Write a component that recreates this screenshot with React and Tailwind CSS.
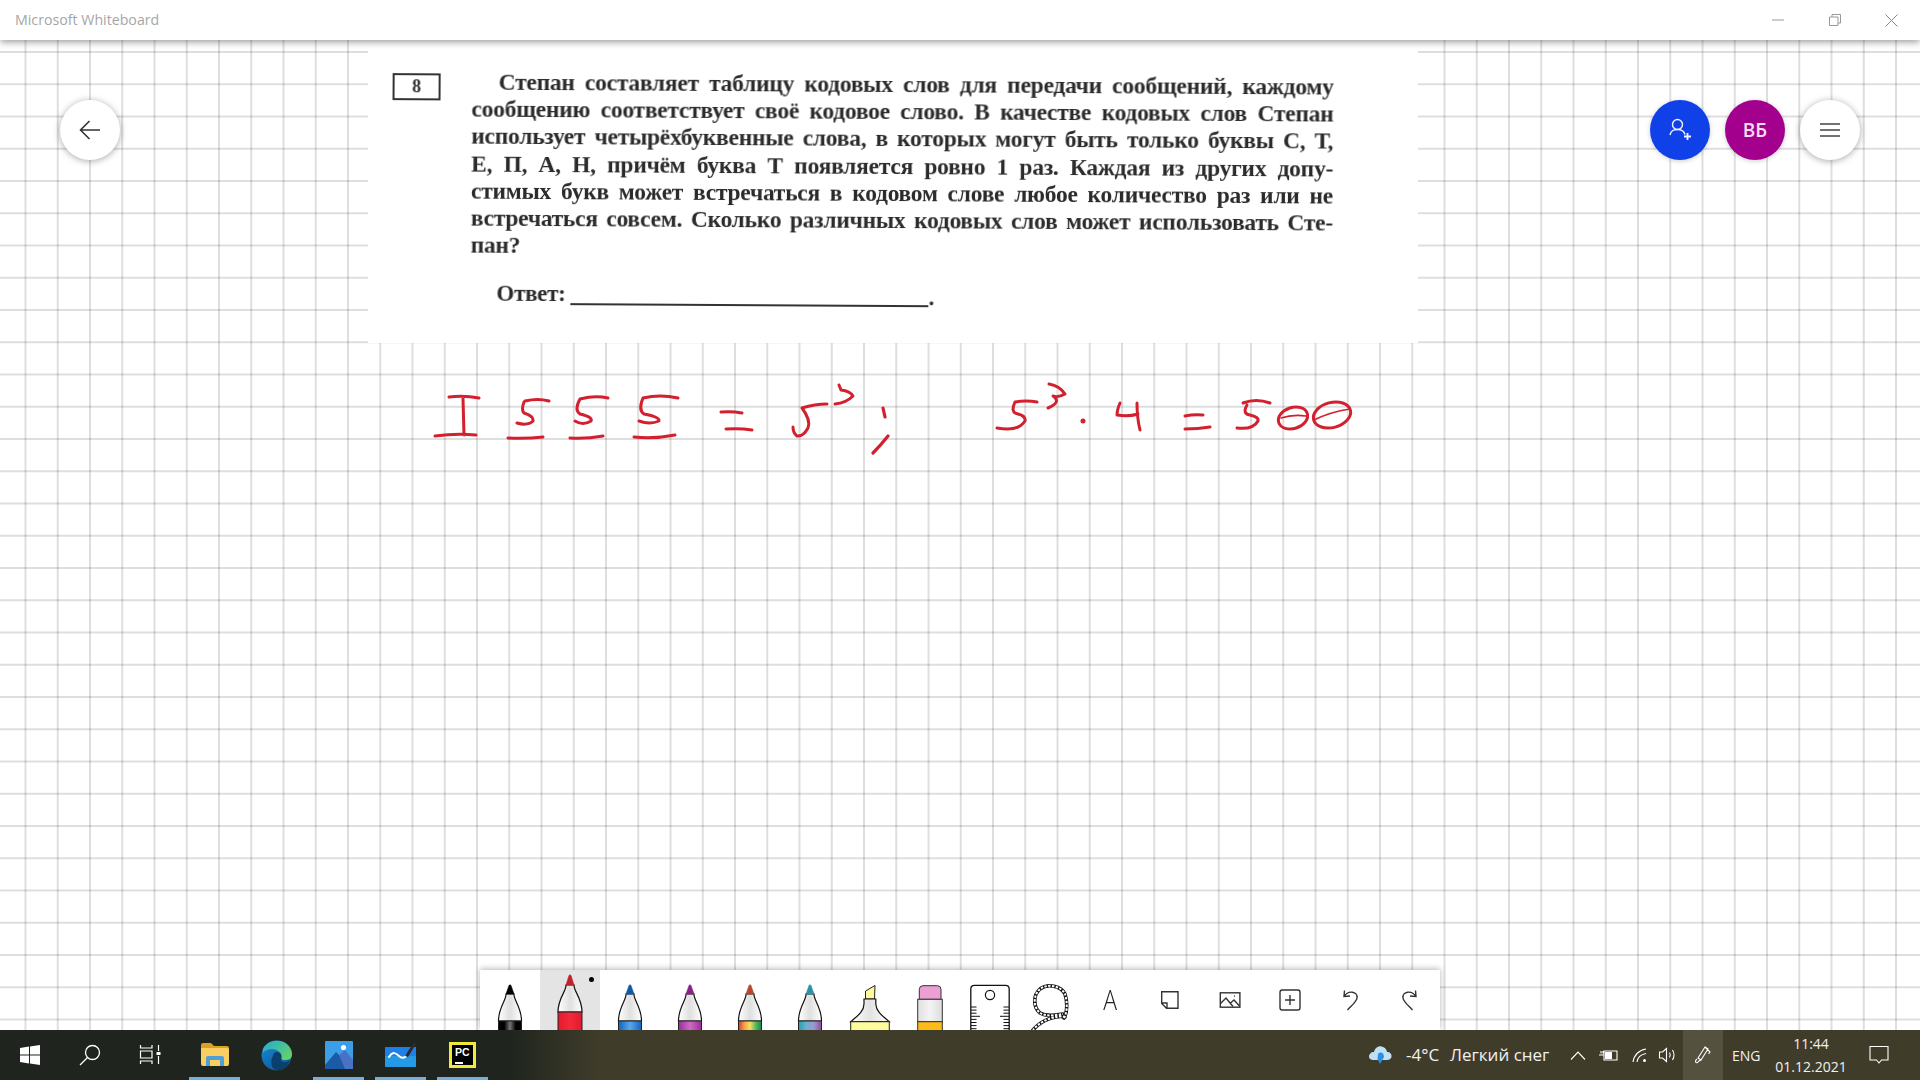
import React from "react";

const serif = "font-['Liberation_Serif',serif]";
const ui = "font-['Open_Sans',sans-serif]";

const LINES = [
  { t: "Степан составляет таблицу кодовых слов для передачи сообщений, каждому", indent: true },
  { t: "сообщению соответствует своё кодовое слово. В качестве кодовых слов Степан" },
  { t: "использует четырёхбуквенные слова, в которых могут быть только буквы С, Т," },
  { t: "Е, П, А, Н, причём буква Т появляется ровно 1 раз. Каждая из других допу-" },
  { t: "стимых букв может встречаться в кодовом слове любое количество раз или не" },
  { t: "встречаться совсем. Сколько различных кодовых слов может использовать Сте-" },
];

function Pen({ nib, id, raised, stops }) {
  const top = raised ? 5 : 15;
  const nibEnd = raised ? 15 : 24;
  const bandY = raised ? 42 : 51;
  const half = raised ? 12 : 11.5;
  return (
    <svg width="60" height="60" viewBox="0 0 60 60">
      <defs>
        <linearGradient id={`b${id}`} x1="0" x2="1" y1="0" y2="0">
          <stop offset="0" stopColor="#fff" />
          <stop offset="0.5" stopColor="#dfdfdf" />
          <stop offset="1" stopColor="#fff" />
        </linearGradient>
        <linearGradient id={`c${id}`} x1="0" x2="1" y1="0" y2="0">
          {stops.map((s, i) => (
            <stop key={i} offset={i / (stops.length - 1)} stopColor={s} />
          ))}
        </linearGradient>
      </defs>
      <path
        d={`M${30 - half} ${bandY} C${30 - half} ${bandY - 14} ${26.5} ${nibEnd + 6} 26 ${nibEnd} L34 ${nibEnd} C${33.5} ${nibEnd + 6} ${30 + half} ${bandY - 14} ${30 + half} ${bandY} Z`}
        fill={`url(#b${id})`}
        stroke="#111"
        strokeWidth="1.2"
      />
      <path d={`M26 ${nibEnd} L29 ${top + 0.5} Q30 ${top - 1} 31 ${top + 0.5} L34 ${nibEnd} Z`} fill={nib} stroke={nib} strokeWidth="0.6" />
      <rect x={30 - half} y={bandY} width={half * 2} height={60 - bandY + 1} fill={`url(#c${id})`} stroke="#222" strokeWidth="1" />
    </svg>
  );
}

function Highlighter() {
  return (
    <svg width="60" height="60" viewBox="0 0 60 60">
      <defs>
        <linearGradient id="hb" x1="0" x2="1" y1="0" y2="0">
          <stop offset="0" stopColor="#fff" />
          <stop offset="0.5" stopColor="#e2e2e2" />
          <stop offset="1" stopColor="#fff" />
        </linearGradient>
      </defs>
      <path d="M25.5 21 L35 15.5 L34.5 29 L25.5 29 Z" fill="#fdfa9c" stroke="#222" strokeWidth="1" />
      <path d="M24 29 L35.8 29 L35.8 34 C36 42 44 47 49.3 51.7 L10.7 51.7 C16 47 24 42 24 34 Z" fill="url(#hb)" stroke="#111" strokeWidth="1.2" />
      <rect x="10.7" y="51.7" width="38.6" height="10" fill="#fdfb9e" stroke="#222" strokeWidth="1" />
    </svg>
  );
}

function Eraser() {
  return (
    <svg width="60" height="60" viewBox="0 0 60 60">
      <defs>
        <linearGradient id="eb" x1="0" x2="1" y1="0" y2="0">
          <stop offset="0" stopColor="#e0e0e0" />
          <stop offset="0.5" stopColor="#f4f4f4" />
          <stop offset="1" stopColor="#dcdcdc" />
        </linearGradient>
      </defs>
      <path d="M19.3 29.3 L19.3 19.5 Q19.3 15.7 23 15.7 L37.5 15.7 Q41 15.7 41 19.5 L41 29.3 Z" fill="#eb9fd2" stroke="#333" strokeWidth="1" />
      <rect x="17.7" y="29.3" width="24.6" height="22.4" fill="url(#eb)" stroke="#333" strokeWidth="1" />
      <rect x="17.7" y="51.7" width="24.6" height="10" fill="#fdbb19" stroke="#333" strokeWidth="1" />
    </svg>
  );
}

function Ruler() {
  const ticks = [];
  for (let i = 0; i < 8; i++) {
    const y = 37 + i * 3.1;
    const long = i === 3;
    ticks.push(<path key={i} d={`M11 ${y} H${long ? 20 : 16.5} M49 ${y} H${long ? 40 : 43.5}`} />);
  }
  return (
    <svg width="60" height="60" viewBox="0 0 60 60" fill="none" stroke="#111" strokeWidth="1">
      <path d="M10.8 61 V19 Q10.8 15.3 14.5 15.3 H45.5 Q49.2 15.3 49.2 19 V61" strokeWidth="1.3" fill="#fff" />
      <circle cx="30" cy="25" r="4.6" strokeWidth="1.2" />
      {ticks}
    </svg>
  );
}

function Lasso() {
  const d = "M44 48 C48 41 47 30 45 24 C41 16 28 13 20 19 C13 25 13 37 20 43 C27 47 36 45 43 44 M45 47 C38 45 22 49 13 60";
  return (
    <svg width="60" height="60" viewBox="0 0 60 60" fill="none">
      <path d={d} stroke="#111" strokeWidth="3.6" strokeLinecap="round" />
      <path d={d} stroke="#fff" strokeWidth="2" strokeDasharray="2.4 1.4" />
    </svg>
  );
}

const iconStroke = { fill: "none", stroke: "#333", strokeWidth: 1.4 };

function Note() {
  return (
    <svg width="60" height="60" viewBox="0 0 60 60" {...iconStroke}>
      <path d="M21.7 21.7 H38 V38.3 H26.5 L21.7 33.5 Z M21.7 33 H27 V38.3" />
    </svg>
  );
}
function Picture() {
  return (
    <svg width="60" height="60" viewBox="0 0 60 60" {...iconStroke}>
      <rect x="20.3" y="22.8" width="19.6" height="14.4" />
      <path d="M20.5 33.5 L26 28 L33 36.5 M30.5 33 L34 30 L39.5 36" />
      <circle cx="34.5" cy="26" r="0.7" fill="#333" stroke="none" />
    </svg>
  );
}
function PlusBox() {
  return (
    <svg width="60" height="60" viewBox="0 0 60 60" {...iconStroke}>
      <rect x="20" y="20" width="20" height="20" rx="2.2" />
      <path d="M30 25 V35 M25 30 H35" />
    </svg>
  );
}
function Undo({ flip }) {
  return (
    <svg width="60" height="60" viewBox="0 0 60 60" {...iconStroke} className={flip ? "-scale-x-100" : ""}>
      <path d="M24.5 20.5 L24 26.5 L30 26 M24 26.5 C28 20 38 21 37 28 C36.5 32 31 36 27.5 40" />
    </svg>
  );
}

function Ink() {
  const red = "#d3202f";
  return (
    <svg className="absolute inset-0 h-full w-full blur-[0.3px]" viewBox="0 40 1920 990" fill="none" stroke={red} strokeWidth="3" strokeLinecap="round" strokeLinejoin="round">
      <path d="M449 397 Q464 395 479 398 M463 398 L464 435 M435 436 Q456 433 476 435" />
      <path d="M525 401 Q538 398 549 401 M524 402 Q521 410 524 413 Q534 416 533 421 Q528 426 517 423 M508 438 Q526 439 543 437" />
      <path d="M580 399 Q595 395 608 398 M580 399 Q574 410 580 414 Q593 417 591 421 Q583 426 575 421 M570 438 Q586 439 603 436" />
      <path d="M643 398 Q660 394 678 398 M643 398 Q638 410 644 414 Q660 417 659 421 Q650 425 639 421 M634 437 Q655 439 675 435" />
      <path d="M721 412 Q732 411 742 413 M726 429 Q740 428 752 430" />
      <path d="M802 408 Q815 404 827 404 M802 408 Q811 420 808 428 Q803 437 797 436 Q793 433 793 427" />
      <path d="M839 385 L841 390 Q850 391 853 396 Q846 403 835 404" />
      <path d="M883 408 L885 417 M888 436 Q880 446 873 453" strokeWidth="3.2" />
      <path d="M1015 402 Q1026 400 1037 402 M1015 402 Q1010 413 1018 414 Q1026 416 1025 421 Q1018 432 997 428" />
      <path d="M1049 384 Q1060 386 1065 394 Q1058 398 1053 396 Q1062 402 1048 408" />
      <circle cx="1083" cy="421" r="1" fill={red} />
      <path d="M1120 403 Q1117 410 1117 415 Q1128 417 1138 414 M1137 403 Q1137 418 1140 430" />
      <path d="M1185 416 Q1194 414 1203 415 M1185 429 Q1198 429 1210 427" />
      <path d="M1243 403 Q1256 398 1270 403 M1247 405 Q1242 414 1250 415 Q1259 417 1258 421 Q1253 430 1237 428" />
      <ellipse cx="1293" cy="418" rx="15" ry="10.5" transform="rotate(-18 1293 418)" />
      <ellipse cx="1332" cy="415" rx="19" ry="12.5" transform="rotate(-15 1332 415)" />
      <path d="M1281 418 Q1293 414 1306 416 M1314 420 Q1330 412 1350 409" strokeWidth="1.6" />
    </svg>
  );
}

function Win() {
  return (
    <svg width="20" height="20" viewBox="0 0 20 20" fill="#fff">
      <path d="M0 3 L9 1.6 V9.5 H0 Z M10 1.4 L20 0 V9.5 H10 Z M0 10.5 H9 V18.4 L0 17 Z M10 10.5 H20 V20 L10 18.6 Z" />
    </svg>
  );
}

function Search() {
  return (
    <svg width="24" height="24" viewBox="0 0 24 24" fill="none" stroke="#fff" strokeWidth="1.3">
      <circle cx="14.5" cy="9.5" r="7" />
      <path d="M9.5 14.5 L2 22" />
    </svg>
  );
}

function TaskView() {
  return (
    <svg width="22" height="20" viewBox="0 0 22 20" fill="none" stroke="#fff" strokeWidth="1.2">
      <path d="M1.5 0 V3 H13 V0 M1.5 6 H13 V13 H1.5 Z M1.5 19 V16 H13 V19 M19.5 0 V6 M19.5 11 V19" />
      <rect x="17.5" y="7" width="4" height="3" fill="#fff" stroke="none" />
    </svg>
  );
}

function Folder() {
  return (
    <svg width="28" height="24" viewBox="0 0 28 24">
      <path d="M0 2 Q0 0 2 0 H10 L13 3 H26 Q28 3 28 5 V8 H0 Z" fill="#d9a21f" />
      <path d="M0 5 H26 Q28 5 28 7 V21 Q28 23 26 23 H2 Q0 23 0 21 Z" fill="#f8cf60" />
      <path d="M5 23 V15 Q5 13 7 13 H21 Q23 13 23 15 V23 H19 V17 H9 V23 Z" fill="#4f9fd6" />
    </svg>
  );
}

function Edge() {
  return (
    <svg width="31" height="31" viewBox="0 0 31 31">
      <defs>
        <linearGradient id="eg" x1="0.2" y1="0" x2="1" y2="0.7">
          <stop offset="0" stopColor="#2bb0c9" />
          <stop offset="1" stopColor="#63d06a" />
        </linearGradient>
        <linearGradient id="eb2" x1="0" y1="0" x2="0.5" y2="1">
          <stop offset="0" stopColor="#1b8bd8" />
          <stop offset="1" stopColor="#0d5f9f" />
        </linearGradient>
      </defs>
      <circle cx="15.5" cy="15.5" r="15" fill="url(#eb2)" />
      <path d="M2 9 C6 0 20 -2 27 5 C32 10 32 17 29 19 C25 21 19 20 20 17 C21 13 16 9 11 9 C7 9 4 10 2 13 Z" fill="url(#eg)" />
      <path d="M12 16 C12 11 18 11 20 14 C22 18 18 21 22 22 C25 23 28 21 29 20 C27 27 20 31 15 30 C10 29 9 20 12 16 Z" fill="#0a3f6e" />
    </svg>
  );
}

function Photos() {
  return (
    <svg width="28" height="28" viewBox="0 0 28 28">
      <rect width="28" height="28" rx="1" fill="#3d9ee8" />
      <circle cx="18.5" cy="6.5" r="2.6" fill="#fff" />
      <path d="M0 24 L11 11 L28 28 H0 Z" fill="#1a5aa6" />
      <path d="M14 14 L20 9 L28 19 V28 H20 Z" fill="#4a72c4" />
    </svg>
  );
}

function BoardIcon() {
  return (
    <svg width="31" height="27" viewBox="0 0 31 27">
      <path d="M0 5 H31 V24 Q31 25 30 25 H1 Q0 25 0 24 Z" fill="#1f7ee8" />
      <path d="M0 14 H31 V24 Q31 25 30 25 H1 Q0 25 0 24 Z" fill="#26a5e4" opacity="0.7" />
      <path d="M4 15 C8 9 11 11 14 14 C17 17 20 16 22 13" stroke="#fff" strokeWidth="2" fill="none" strokeLinecap="round" />
      <path d="M20 14 L29 0 L31 2 L23 15 Z" fill="#2a2a30" />
    </svg>
  );
}

function PyCharm() {
  return (
    <div className="flex h-[26px] w-[27px] flex-col items-start bg-[#f2e93a] p-[3px]">
      <div className="flex h-full w-full flex-col bg-black pl-[3px] pt-[2px] font-['Liberation_Sans',sans-serif] text-[10.5px] font-bold leading-[10px] text-white">
        PC
        <div className="mt-[5px] h-[1.5px] w-[8px] bg-white" />
      </div>
    </div>
  );
}

function Cloud() {
  return (
    <svg width="24" height="22" viewBox="0 0 24 22" className="shrink-0">
      <path d="M5 16 C1 16 0 12 2 10 C3 8 5 8 6 8 C7 3 12 1 15 3 C18 4 19 7 19 8 C22 8 24 10 23.5 13 C23 15 21 16 19 16 Z" fill="#bfe0f5" />
      <path d="M10 10 C13 7 16 9 16 13 L12 20 L9.5 15 Z" fill="#2d8fe0" />
    </svg>
  );
}

const trayStroke = { fill: "none", stroke: "#fff", strokeWidth: 1.1 };

function TaskBtn({ children, line }) {
  return (
    <div className="relative flex h-[50px] w-[51px] items-center justify-center">
      {children}
      {line && <div className="absolute bottom-0 left-0 right-0 h-[3px] bg-[#76aedd]" />}
    </div>
  );
}

export default function App() {
  return (
    <div className="flex h-screen w-screen flex-col overflow-hidden bg-white">
      <header className="relative z-20 flex h-10 shrink-0 items-center justify-between bg-white pl-[15px] shadow-[0_2px_7px_rgba(0,0,0,0.4)]">
        <span className={`${ui} text-[14.2px] text-[#a6a6a6]`}>Microsoft Whiteboard</span>
        <div className="flex items-center">
          <div className="flex h-10 w-[57px] items-center justify-center">
            <svg width="12" height="12" viewBox="0 0 12 12" stroke="#999" fill="none"><path d="M0 6 H12" /></svg>
          </div>
          <div className="flex h-10 w-[57px] items-center justify-center">
            <svg width="12" height="12" viewBox="0 0 12 12" stroke="#999" fill="none"><path d="M0.5 3 H9 V11.5 H0.5 Z M3 3 V0.5 H11.5 V9 H9" /></svg>
          </div>
          <div className="flex h-10 w-[57px] items-center justify-center">
            <svg width="13" height="13" viewBox="0 0 13 13" stroke="#888" fill="none"><path d="M0.5 0.5 L12.5 12.5 M12.5 0.5 L0.5 12.5" /></svg>
          </div>
        </div>
      </header>

      <main className="relative flex-1 overflow-hidden bg-white bg-[repeating-linear-gradient(to_right,transparent_0,transparent_24px,rgba(0,0,0,0.13)_25px,rgba(0,0,0,0.13)_26px,transparent_27px,transparent_32.25px),repeating-linear-gradient(to_bottom,transparent_0,transparent_10.5px,rgba(0,0,0,0.13)_11.5px,rgba(0,0,0,0.13)_12.5px,transparent_13.5px,transparent_32.25px)]">
        <div className="absolute left-[368px] top-0 flex h-[303px] w-[1050px] bg-white">
          <div className={`flex h-full w-full rotate-[0.33deg] items-start pl-[24px] pt-[35px] text-[#2b2b2b] blur-[0.45px] ${serif}`}>
            <div className="mt-[1px] flex h-[27px] w-[48px] shrink-0 items-center justify-center border-2 border-[#333] text-[18px] font-bold">8</div>
            <div className="ml-[31px] -mt-[4px] w-[862px]">
              {LINES.map((l) => (
                <div
                  key={l.t}
                  className={`h-[27.2px] whitespace-nowrap text-[23.5px] font-bold leading-[27.2px] tracking-[-0.25px] [text-align-last:justify] ${l.indent ? "pl-[27px]" : ""}`}
                >
                  {l.t}
                </div>
              ))}
              <div className="h-[27.2px] text-[23.5px] font-bold leading-[27.2px] tracking-[-0.25px]">пан?</div>
              <div className="mt-[21px] flex items-end pl-[26px] text-[23px] font-bold leading-[27.2px] tracking-[-0.25px]">
                <span>Ответ:</span>
                <span className="mb-[3px] ml-[5px] h-[2px] w-[358px] bg-[#333]" />
                <span className="leading-[24px]">.</span>
              </div>
            </div>
          </div>
        </div>

        <Ink />

        <button className="absolute left-[60px] top-[60px] flex h-[60px] w-[60px] items-center justify-center rounded-full bg-white shadow-[0_1px_7px_rgba(0,0,0,0.35)]">
          <svg width="22" height="20" viewBox="0 0 22 20" fill="none" stroke="#333" strokeWidth="1.6">
            <path d="M21 10 H1.5 M10.5 1 L1.5 10 L10.5 19" />
          </svg>
        </button>

        <div className="absolute right-[60px] top-[60px] flex gap-[15px]">
          <button className="flex h-[60px] w-[60px] items-center justify-center rounded-full bg-[#1040e8] shadow-[0_1px_5px_rgba(0,0,0,0.2)]">
            <svg width="24" height="24" viewBox="0 0 24 24" fill="none" stroke="#f2f2ff" strokeWidth="1.4">
              <circle cx="9.5" cy="6.5" r="5" />
              <path d="M2 17 C3 12 6 11.5 9.5 11.5 C13 11.5 16 13 17 16.5" />
              <path d="M19.5 15 V22 M16 18.5 H23" strokeWidth="1.8" />
            </svg>
          </button>
          <button className={`flex h-[60px] w-[60px] items-center justify-center rounded-full bg-[#a4008e] text-[19px] font-semibold text-[#f9dcf3] shadow-[0_1px_5px_rgba(0,0,0,0.2)] ${ui}`}>
            ВБ
          </button>
          <button className="flex h-[60px] w-[60px] items-center justify-center rounded-full bg-white shadow-[0_1px_7px_rgba(0,0,0,0.35)]">
            <svg width="20" height="14" viewBox="0 0 20 14" stroke="#444" strokeWidth="1.7">
              <path d="M0 1 H20 M0 7 H20 M0 13 H20" />
            </svg>
          </button>
        </div>

        <div className="absolute bottom-0 left-[480px] flex h-[60px] w-[960px] bg-white shadow-[0_-1px_6px_rgba(0,0,0,0.3)]">
          <div className="h-[60px] w-[60px]"><Pen id="k" nib="#000" stops={["#000", "#000", "#777", "#000", "#000"]} /></div>
          <div className="relative h-[60px] w-[60px] bg-[#e4e4e4]">
            <Pen id="r" raised nib="#c4202c" stops={["#e01c2c", "#f4283a", "#e01c2c"]} />
            <div className="absolute left-[49px] top-[7px] h-[5px] w-[5px] rounded-full bg-black" />
          </div>
          <div className="h-[60px] w-[60px]"><Pen id="b" nib="#0f5aa6" stops={["#0f66c0", "#5ba6e8", "#0f66c0"]} /></div>
          <div className="h-[60px] w-[60px]"><Pen id="p" nib="#8a2283" stops={["#a02a9a", "#cc6cc6", "#a02a9a"]} /></div>
          <div className="h-[60px] w-[60px]"><Pen id="o" nib="#b8472e" stops={["#d43a2a", "#f5a04a", "#f5e060", "#58b858", "#0e8a50"]} /></div>
          <div className="h-[60px] w-[60px]"><Pen id="t" nib="#2a93a8" stops={["#22a0a8", "#6cb0d0", "#9a9ad0", "#8a4ca0"]} /></div>
          <div className="h-[60px] w-[60px]"><Highlighter /></div>
          <div className="h-[60px] w-[60px]"><Eraser /></div>
          <div className="h-[60px] w-[60px]"><Ruler /></div>
          <div className="h-[60px] w-[60px]"><Lasso /></div>
          <div className={`flex h-[60px] w-[60px] items-center justify-center pb-[1px] text-[27px] font-light leading-none text-[#222] ${ui}`}>
            <span className="scale-x-[0.85]">A</span>
          </div>
          <div className="h-[60px] w-[60px]"><Note /></div>
          <div className="h-[60px] w-[60px]"><Picture /></div>
          <div className="h-[60px] w-[60px]"><PlusBox /></div>
          <div className="h-[60px] w-[60px]"><Undo /></div>
          <div className="h-[60px] w-[60px]"><Undo flip /></div>
        </div>
      </main>

      <footer className={`relative z-20 flex h-[50px] shrink-0 items-center justify-between bg-[linear-gradient(to_right,#1f251e_0,#1f251e_510px,#403c2a_600px)] text-white ${ui}`}>
        <div className="flex items-center">
          <div className="flex h-[50px] w-[60px] items-center justify-center"><Win /></div>
          <div className="flex h-[50px] w-[60px] items-center justify-center"><Search /></div>
          <div className="flex h-[50px] w-[60px] items-center justify-center"><TaskView /></div>
          <div className="ml-[9px] flex gap-[11px]">
            <TaskBtn line><Folder /></TaskBtn>
            <TaskBtn><Edge /></TaskBtn>
            <TaskBtn line><Photos /></TaskBtn>
            <TaskBtn line><BoardIcon /></TaskBtn>
            <TaskBtn line><PyCharm /></TaskBtn>
          </div>
        </div>

        <div className="flex h-[50px] items-center pr-[31px] text-[#f1f1f1]">
          <Cloud />
          <span className="ml-[14px] w-[34px] whitespace-nowrap text-[17px]">-4°C</span>
          <span className="ml-[10px] w-[98px] whitespace-nowrap text-[17px]">Легкий снег</span>
          <svg className="ml-[22px]" width="16" height="9" viewBox="0 0 16 9" {...trayStroke}><path d="M1 8.5 L8 1 L15 8.5" /></svg>
          <svg className="ml-[13px]" width="19" height="13" viewBox="0 0 19 13" {...trayStroke}>
            <path d="M5 2 H18 V11 H5 Z M0 6 H5 M2 2 V4.5 M4 2 V4.5" />
            <rect x="6" y="3" width="7" height="7" fill="#fff" stroke="none" />
          </svg>
          <svg className="ml-[14px]" width="15" height="15" viewBox="0 0 15 15" {...trayStroke}>
            <path d="M1 14 C2 7 7 2 14 1 M5 14 C5.5 10 9 6.5 14 5.5" />
            <circle cx="12.5" cy="12.5" r="1.5" fill="#fff" stroke="none" />
          </svg>
          <svg className="ml-[11px]" width="20" height="16" viewBox="0 0 19 16" {...trayStroke}>
            <path d="M1 5 H4 L8 1.5 V14.5 L4 11 H1 Z M11 5.5 Q12.5 8 11 10.5 M14 3 Q17 8 14 13" />
          </svg>
          <div className="ml-[5px] flex h-[50px] w-[40px] items-center justify-center bg-[#54513f]">
            <svg width="19" height="20" viewBox="0 0 19 20" {...trayStroke}>
              <path d="M11 2 L14 4 L7 15 L4 13 Z M11 2 L16 7 L14.5 9 M7 15 L5 16 C2 20 0 16 3 14" />
            </svg>
          </div>
          <span className="ml-[9px] w-[28px] whitespace-nowrap text-[14px]">ENG</span>
          <div className="ml-[17px] flex w-[68px] flex-col items-center whitespace-nowrap text-[14px] leading-[23px]">
            <span>11:44</span>
            <span>01.12.2021</span>
          </div>
          <svg className="ml-[24px]" width="20" height="18" viewBox="0 0 19 18" {...trayStroke}>
            <path d="M0.5 0.5 H18.5 V14 H12 L9.5 17 L7 14 H0.5 Z" />
          </svg>
        </div>
      </footer>
    </div>
  );
}
